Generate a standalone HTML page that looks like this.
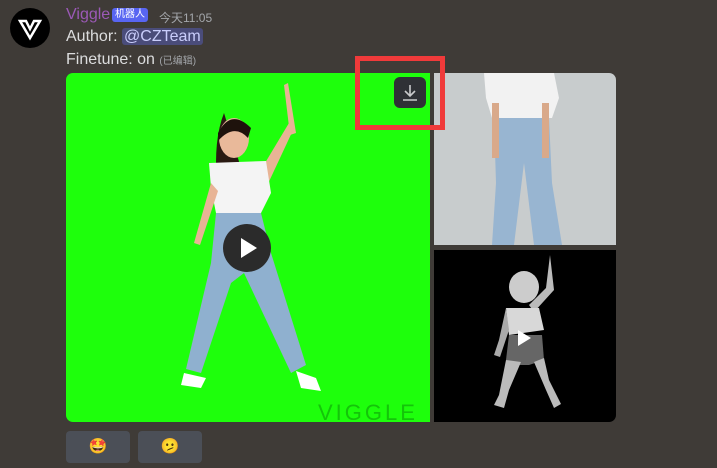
<!DOCTYPE html>
<html><head><meta charset="utf-8"><style>
*{margin:0;padding:0;box-sizing:border-box}
body{width:717px;height:468px;background:#3f3b37;overflow:hidden;position:relative;font-family:"Liberation Sans","Noto Sans CJK SC",sans-serif;color:#dcddde}
.abs{position:absolute}
</style></head><body>
<div class="abs" style="left:10px;top:8px;width:40px;height:40px;border-radius:50%;background:#000"></div>
<svg class="abs" style="left:10px;top:8px" width="40" height="40"><path d="M10 13 L20 30 L30 13 L24 13 L20 21 L16 13 Z" fill="none" stroke="#fff" stroke-width="2.5"/></svg>
<div class="abs" style="left:66px;top:6px;font-size:16px;color:#9b59b6">Viggle</div>
<div class="abs" style="left:112px;top:8px;height:14px;padding:0 3px;background:#5865f2;border-radius:3px;font-size:10px;line-height:14px;color:#fff">机器人</div>
<div class="abs" style="left:159px;top:9px;font-size:12px;color:#a3a6aa">今天11:05</div>
<div class="abs" style="left:66px;top:28px;font-size:16px">Author: <span style="background:#4a4c7a;color:#c9cdfb;border-radius:3px;padding:0 2px">@CZTeam</span></div>
<div class="abs" style="left:66px;top:51px;font-size:16px">Finetune: on <span style="font-size:10px;color:#a3a6aa">(已编辑)</span></div>

<div class="abs" style="left:66px;top:73px;width:364px;height:349px;background:#1eff0c;border-radius:7px 0 0 7px;overflow:hidden">
<svg width="364" height="349">
 <path d="M158 40 Q150 60 150 90 L150 140 L170 140 L175 95 Z" fill="#2a1a12"/>
 <ellipse cx="168" cy="65" rx="15" ry="20" fill="#e9b99a"/>
 <path d="M152 60 Q165 35 185 55 L182 65 Q168 50 152 68Z" fill="#1e120c"/>
 <path d="M190 105 L223 50 L228 55 L200 115Z" fill="#e8b495"/>
 <path d="M222 10 L230 60 L224 62 L218 12Z" fill="#e8b495"/>
 <path d="M143 90 L200 88 L205 120 L195 140 L150 140 L145 115Z" fill="#f4f4f4"/>
 <path d="M145 110 L128 170 L134 172 L152 118Z" fill="#e8b495"/>
 <path d="M150 140 L195 140 L205 180 L240 292 L225 300 L178 200 L165 210 L135 300 L120 296 L145 190Z" fill="#8fb0cf"/>
 <path d="M118 300 L140 305 L135 315 L115 312Z" fill="#fff"/>
 <path d="M230 298 L250 305 L255 318 L235 315Z" fill="#fff"/>
 <circle cx="181" cy="175" r="24" fill="#2b2b2b"/>
 <path d="M175 165 L191 175 L175 185Z" fill="#fff"/>
 <text x="252" y="347" font-family="Liberation Sans" font-size="22" fill="#14c40a" letter-spacing="3">VIGGLE</text>
</svg>
</div>

<div class="abs" style="left:434px;top:73px;width:182px;height:172px;background:#c8cccd;border-radius:0 7px 0 0;overflow:hidden">
<svg width="182" height="172">
 <path d="M50 0 L120 0 L125 25 L118 45 L58 45 L52 25Z" fill="#f2f2f2"/>
 <path d="M60 45 L115 45 L118 110 L128 172 L100 172 L90 90 L80 172 L58 172 L62 110Z" fill="#98b5d1"/>
 <rect x="58" y="30" width="7" height="55" fill="#d9a98a"/><rect x="108" y="30" width="7" height="55" fill="#d9a98a"/>
</svg></div>
<div class="abs" style="left:434px;top:250px;width:182px;height:172px;background:#000;border-radius:0 0 7px 0;overflow:hidden">
<svg width="182" height="172">
 <ellipse cx="90" cy="37" rx="15" ry="16" fill="#ccc"/>
 <path d="M116 5 L120 40 L100 62 L95 55 L112 38Z" fill="#bbb"/>
 <path d="M72 58 L105 58 L110 80 L75 85Z" fill="#d8d8d8"/>
 <path d="M75 85 L108 85 L110 110 L95 115 L85 115 L72 110Z" fill="#666"/>
 <path d="M72 58 L65 90 L60 105 L66 107 L75 80Z" fill="#aaa"/>
 <path d="M72 110 L65 145 L60 155 L70 158 L75 140 L87 112Z" fill="#bbb"/>
 <path d="M100 112 L112 140 L120 158 L127 154 L115 130 L110 108Z" fill="#bbb"/>
 <path d="M84 80 L97 88 L84 96Z" fill="#fff"/>
</svg></div>

<div class="abs" style="left:394px;top:77px;width:32px;height:31px;background:#2f3136;border-radius:6px"></div>
<svg class="abs" style="left:394px;top:77px" width="32" height="31"><path d="M16 8 V19 M11 14 L16 19 L21 14 M9 23 H23" stroke="#c9cacc" stroke-width="1.6" fill="none"/></svg>
<div class="abs" style="left:355px;top:56px;width:90px;height:74px;border:5px solid #f03a3a"></div>

<div class="abs" style="left:66px;top:431px;width:64px;height:32px;background:#4b4f57;border-radius:4px;text-align:center;font-size:15px;line-height:32px">🤩</div>
<div class="abs" style="left:138px;top:431px;width:64px;height:32px;background:#4b4f57;border-radius:4px;text-align:center;font-size:15px;line-height:32px">🫤</div>
</body></html>
